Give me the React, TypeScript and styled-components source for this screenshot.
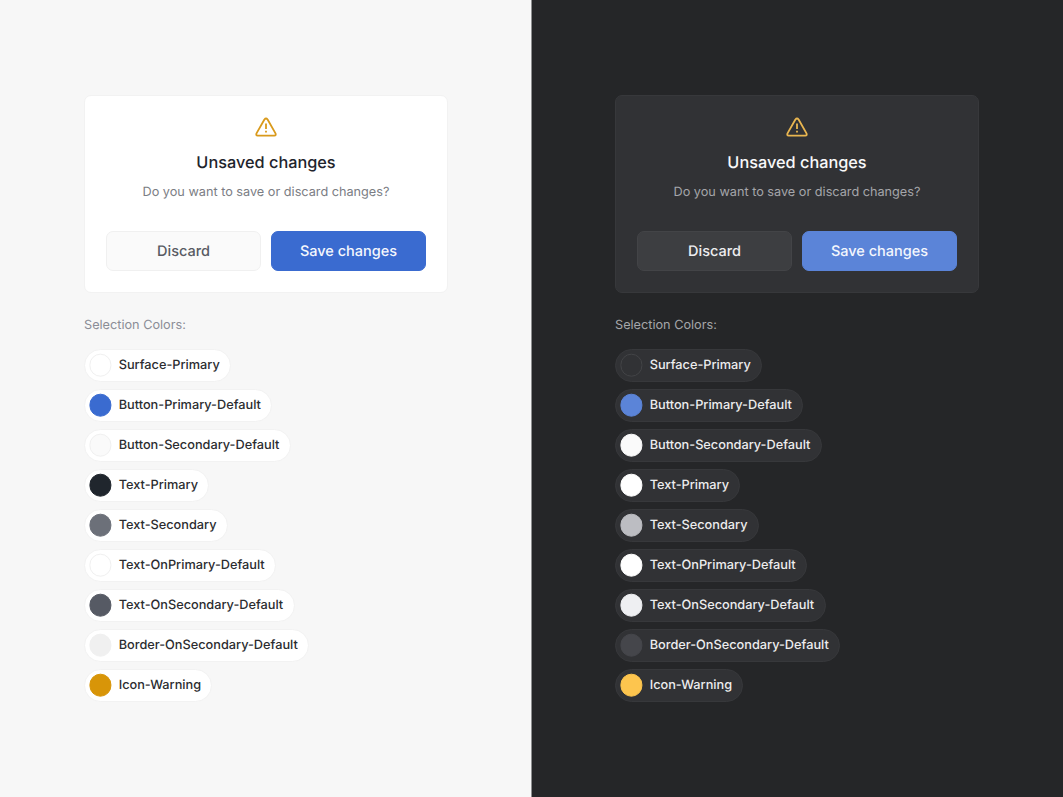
import React from "react";
import styled, { createGlobalStyle, ThemeProvider } from "styled-components";

const light = {
  page: "#f7f7f7",
  edge: "#f7f7f7",
  surface: "#ffffff",
  border: "#f2f2f2",
  title: "#1f252d",
  text: "#7b7d84",
  caption: "#8b8d96",
  chipText: "#2b2c2f",
  primary: "#3a6bd0",
  onPrimary: "#f4f7fd",
  secondary: "#fafafa",
  onSecondary: "#585b63",
  secondaryBorder: "#f0f0f0",
  warning: "#d99a1c",
};

const dark = {
  page: "#252628",
  edge: "#8e8f90",
  surface: "#313235",
  border: "#37383b",
  title: "#f8f8f9",
  text: "#a5a6aa",
  caption: "#a5a6aa",
  chipText: "#ededee",
  primary: "#5b84d8",
  onPrimary: "#f4f7fd",
  secondary: "#3d3e41",
  onSecondary: "#ededf0",
  secondaryBorder: "#434447",
  warning: "#e9b650",
};

type Palette = typeof light;

declare module "styled-components" {
  export interface DefaultTheme extends Palette {}
}

const GlobalStyle = createGlobalStyle`
  * { box-sizing: border-box; }
  body {
    margin: 0;
    font-family: Inter, "Liberation Sans", sans-serif;
    text-rendering: geometricPrecision;
  }
`;

const Page = styled.main`
  display: grid;
  grid-template-columns: 531px 1fr;
  height: 797px;
  overflow: hidden;
`;

const Panel = styled.section`
  padding: 95px 0 0 83px;
  border-left: 1px solid ${({ theme }) => theme.edge};
  background: ${({ theme }) => theme.page};
`;

const Dialog = styled.div`
  display: flex;
  flex-direction: column;
  align-items: center;
  width: 364px;
  height: 198px;
  padding: 19px 21px 0;
  border: 1px solid ${({ theme }) => theme.border};
  border-radius: 7px;
  background: ${({ theme }) => theme.surface};
`;

const WarningIcon = styled.svg`
  display: block;
  width: 24px;
  height: 24px;
  color: ${({ theme }) => theme.warning};
`;

const Title = styled.h1`
  margin: 12px 0 0;
  font-size: 16.3px;
  font-weight: 500;
  line-height: 22px;
  color: ${({ theme }) => theme.title};
`;

const Description = styled.p`
  margin: 11px 0 0;
  font-size: 12.7px;
  line-height: 18px;
  color: ${({ theme }) => theme.text};
`;

const Actions = styled.div`
  display: grid;
  grid-template-columns: 1fr 1fr;
  gap: 10px;
  width: 100%;
  margin-top: 29px;
`;

const Button = styled.button<{ $primary?: boolean }>`
  height: 40px;
  padding: 1px 0 0;
  border: 1px solid ${({ theme, $primary }) => ($primary ? theme.primary : theme.secondaryBorder)};
  border-radius: 7px;
  background: ${({ theme, $primary }) => ($primary ? theme.primary : theme.secondary)};
  color: ${({ theme, $primary }) => ($primary ? theme.onPrimary : theme.onSecondary)};
  font-family: inherit;
  font-size: 14.5px;
  font-weight: 500;
  line-height: 20px;
  text-rendering: inherit;
`;

const Caption = styled.h2`
  margin: 24px 0 0;
  font-size: 12.7px;
  font-weight: 400;
  line-height: 18px;
  color: ${({ theme }) => theme.caption};
`;

const ChipList = styled.ul`
  display: flex;
  flex-direction: column;
  align-items: flex-start;
  gap: 7px;
  margin: 14px 0 0;
  padding: 0;
  list-style: none;
`;

const Chip = styled.li`
  display: flex;
  align-items: center;
  gap: 7.3px;
  height: 33px;
  padding: 0 10.4px 0 4px;
  border: 1px solid ${({ theme }) => theme.border};
  border-radius: 17px;
  background: ${({ theme }) => theme.surface};
`;

const ChipLabel = styled.span`
  margin-top: 1px;
  color: ${({ theme }) => theme.chipText};
  font-size: 12.74px;
  font-weight: 500;
  line-height: 18px;
  white-space: nowrap;
`;

const Swatch = styled.span<{ $color: string; $outline?: string }>`
  width: 22.4px;
  height: 22.4px;
  border: 1px solid ${({ $color, $outline }) => $outline ?? $color};
  border-radius: 50%;
  background: ${({ $color }) => $color};
  transform: translate(0.4px, -0.3px);
`;

type Token = { name: string; color: string; outline?: string };

const lightTokens: Token[] = [
  { name: "Surface-Primary", color: "#ffffff", outline: "#f0f0f0" },
  { name: "Button-Primary-Default", color: "#3a6bd0" },
  { name: "Button-Secondary-Default", color: "#fafafa", outline: "#f0f0f0" },
  { name: "Text-Primary", color: "#20262d" },
  { name: "Text-Secondary", color: "#6c7079" },
  { name: "Text-OnPrimary-Default", color: "#ffffff", outline: "#f0f0f0" },
  { name: "Text-OnSecondary-Default", color: "#565a64" },
  { name: "Border-OnSecondary-Default", color: "#f0f0f0" },
  { name: "Icon-Warning", color: "#d89508" },
];

const darkTokens: Token[] = [
  { name: "Surface-Primary", color: "#313235", outline: "#434447" },
  { name: "Button-Primary-Default", color: "#5b84d8" },
  { name: "Button-Secondary-Default", color: "#fafafa" },
  { name: "Text-Primary", color: "#ffffff" },
  { name: "Text-Secondary", color: "#bcbdc2" },
  { name: "Text-OnPrimary-Default", color: "#ffffff" },
  { name: "Text-OnSecondary-Default", color: "#eeeff2" },
  { name: "Border-OnSecondary-Default", color: "#45464b" },
  { name: "Icon-Warning", color: "#fdc54e" },
];

function Preview({ tokens }: { tokens: Token[] }) {
  return (
    <Panel>
      <Dialog>
        <WarningIcon viewBox="0 0 24 24" fill="none" stroke="currentColor" strokeWidth="1.8">
          <path
            d="M10.4 4.5 2.5 18.4Q1.6 20.5 3.7 20.6H20.3Q22.4 20.5 21.5 18.4L13.6 4.5Q12 2.5 10.4 4.5Z"
            strokeLinejoin="round"
          />
          <path d="M12 8.6V14M12 15.8V17.5" />
        </WarningIcon>
        <Title>Unsaved changes</Title>
        <Description>Do you want to save or discard changes?</Description>
        <Actions>
          <Button>Discard</Button>
          <Button $primary>Save changes</Button>
        </Actions>
      </Dialog>
      <Caption>Selection Colors:</Caption>
      <ChipList>
        {tokens.map(({ name, color, outline }) => (
          <Chip key={name}>
            <Swatch $color={color} $outline={outline} />
            <ChipLabel>{name}</ChipLabel>
          </Chip>
        ))}
      </ChipList>
    </Panel>
  );
}

export default function App() {
  return (
    <>
      <GlobalStyle />
      <Page>
        <ThemeProvider theme={light}>
          <Preview tokens={lightTokens} />
        </ThemeProvider>
        <ThemeProvider theme={dark}>
          <Preview tokens={darkTokens} />
        </ThemeProvider>
      </Page>
    </>
  );
}
